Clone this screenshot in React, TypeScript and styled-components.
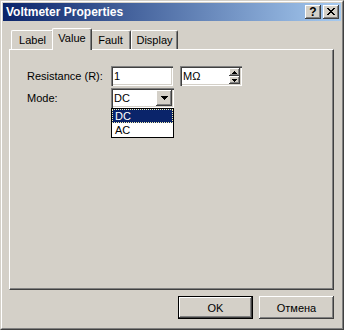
import React from "react";
import styled, { createGlobalStyle, css } from "styled-components";

const Global = createGlobalStyle`
  html, body { margin: 0; padding: 0; background: #d4d0c8; }
  * { box-sizing: border-box; }
`;

const raised = css`
  box-shadow: inset -1px -1px #404040, inset 1px 1px #ffffff, inset -2px -2px #808080;
`;

const sunken = css`
  box-shadow: inset 1px 1px #808080, inset 2px 2px #404040, inset -1px -1px #ffffff, inset -2px -2px #d4d0c8;
`;

const Window = styled.div`
  width: 344px;
  height: 330px;
  background: #d4d0c8;
  border: 1px solid;
  border-color: #d4d0c8 #404040 #404040 #d4d0c8;
  display: flex;
  flex-direction: column;
  font-family: "Liberation Sans", Arial, sans-serif;
  font-size: 11px;
  color: #000;
`;

const Frame = styled.div`
  flex: 1;
  display: flex;
  flex-direction: column;
  padding: 1px;
  border: 1px solid;
  border-color: #ffffff #808080 #808080 #ffffff;
`;

const TitleBar = styled.div`
  height: 18px;
  display: flex;
  align-items: center;
  padding: 0 2px 0 3px;
  background: linear-gradient(to right, #0a246a, #a6caf0);
`;

const Title = styled.div`
  flex: 1;
  color: #fff;
  font-weight: bold;
  font-size: 12px;
`;

const CaptionButtons = styled.div`
  display: flex;
  gap: 2px;
`;

const CaptionButton = styled.div`
  width: 16px;
  height: 14px;
  background: #d4d0c8;
  ${raised};
  display: flex;
  align-items: center;
  justify-content: center;
  font-weight: bold;
  font-size: 12px;
  line-height: 14px;
  padding-bottom: 1px;
`;

const Body = styled.div`
  flex: 1;
  display: flex;
  flex-direction: column;
  padding: 7px 7px 8px 6px;
`;

const TabRow = styled.div`
  height: 21px;
  display: flex;
  align-items: flex-end;
  padding-left: 2px;
  position: relative;
  z-index: 1;
`;

const Tab = styled.div<{ $w: number; $active?: boolean }>`
  width: ${(p) => p.$w}px;
  height: ${(p) => (p.$active ? 22 : 19)}px;
  margin: ${(p) => (p.$active ? "0 -2px -1px -2px" : "0")};
  background: #d4d0c8;
  border-top: 1px solid #ffffff;
  border-left: 1px solid #ffffff;
  border-right: 1px solid #404040;
  border-top-left-radius: 2px;
  border-top-right-radius: 2px;
  box-shadow: inset -1px 0 #808080;
  display: flex;
  align-items: ${(p) => (p.$active ? "flex-start" : "center")};
  padding-top: ${(p) => (p.$active ? "3px" : "0")};
  justify-content: center;
  position: relative;
  z-index: ${(p) => (p.$active ? 2 : 1)};
`;

const Panel = styled.div`
  flex: 1;
  border: 1px solid;
  border-color: #ffffff #404040 #404040 #ffffff;
  box-shadow: inset -1px -1px #808080;
  padding: 16px 0 0 17px;
`;

const Form = styled.div`
  display: grid;
  grid-template-columns: 78px 63px 62px;
  grid-auto-rows: 20px;
  column-gap: 6px;
  row-gap: 2px;
  align-items: center;
`;

const FieldLabel = styled.div`
  align-self: center;
  white-space: nowrap;
`;

const Edit = styled.div<{ $w: number }>`
  width: ${(p) => p.$w}px;
  height: 20px;
  background: #fff;
  ${sunken};
  display: flex;
  align-items: center;
  padding-left: 3px;
  position: relative;
`;

const EditText = styled.span`
  flex: 1;
`;

const Spinner = styled.div`
  width: 11px;
  height: 16px;
  margin-right: 2px;
  display: flex;
  flex-direction: column;
`;

const SpinButton = styled.div`
  flex: 1;
  background: #d4d0c8;
  ${raised};
  display: flex;
  align-items: center;
  justify-content: center;
`;

const ComboButton = styled.div`
  width: 16px;
  height: 16px;
  margin-right: 2px;
  background: #d4d0c8;
  ${raised};
  display: flex;
  align-items: center;
  justify-content: center;
`;

const DropList = styled.div`
  position: absolute;
  top: 100%;
  left: 0;
  width: 63px;
  height: 30px;
  background: #fff;
  border: 1px solid #000;
  display: flex;
  flex-direction: column;
`;

const ListItem = styled.div<{ $sel?: boolean }>`
  height: 14px;
  line-height: 12px;
  padding-left: 2px;
  background: ${(p) => (p.$sel ? "#0a246a" : "#fff")};
  color: ${(p) => (p.$sel ? "#fff" : "#000")};
  border: 1px dotted ${(p) => (p.$sel ? "#f4f0b0" : "transparent")};
`;

const Footer = styled.div`
  display: flex;
  justify-content: flex-end;
  gap: 6px;
  margin-top: 6px;
`;

const Button = styled.div<{ $default?: boolean }>`
  width: 75px;
  height: 23px;
  background: #d4d0c8;
  display: flex;
  align-items: center;
  justify-content: center;
  ${(p) =>
    p.$default
      ? css`
          border: 1px solid #000;
          box-shadow: inset -1px -1px #404040, inset 1px 1px #ffffff, inset -2px -2px #808080;
        `
      : raised};
`;

const Tri = ({ up, w = 7 }: { up?: boolean; w?: number }) => {
  const h = Math.ceil(w / 2);
  return (
    <svg width={w} height={h} viewBox={`0 0 ${w} ${h}`} shapeRendering="crispEdges">
      <polygon points={up ? `0,${h} ${w},${h} ${w / 2},0` : `0,0 ${w},0 ${w / 2},${h}`} fill="#000" />
    </svg>
  );
};

export default function App() {
  return (
    <>
      <Global />
      <Window>
        <Frame>
          <TitleBar>
            <Title>Voltmeter Properties</Title>
            <CaptionButtons>
              <CaptionButton>?</CaptionButton>
              <CaptionButton>
                <svg width="8" height="7" viewBox="0 0 8 7" shapeRendering="crispEdges">
                  <path d="M0 0h2v1h-2zM6 0h2v1h-2zM1 1h2v1h-2zM5 1h2v1h-2zM2 2h4v1h-4zM3 3h2v1h-2zM2 4h4v1h-4zM1 5h2v1h-2zM5 5h2v1h-2zM0 6h2v1h-2zM6 6h2v1h-2z" fill="#000" />
                </svg>
              </CaptionButton>
            </CaptionButtons>
          </TitleBar>
          <Body>
            <TabRow>
              <Tab $w={43}>Label</Tab>
              <Tab $w={40} $active>Value</Tab>
              <Tab $w={41}>Fault</Tab>
              <Tab $w={47}>Display</Tab>
            </TabRow>
            <Panel>
              <Form>
                <FieldLabel>Resistance (R):</FieldLabel>
                <Edit $w={62}>
                  <EditText>1</EditText>
                </Edit>
                <Edit $w={62}>
                  <EditText>MΩ</EditText>
                  <Spinner>
                    <SpinButton>
                      <Tri up w={5} />
                    </SpinButton>
                    <SpinButton>
                      <Tri w={5} />
                    </SpinButton>
                  </Spinner>
                </Edit>
                <FieldLabel>Mode:</FieldLabel>
                <Edit $w={63}>
                  <EditText>DC</EditText>
                  <ComboButton>
                    <Tri w={7} />
                  </ComboButton>
                  <DropList>
                    <ListItem $sel>DC</ListItem>
                    <ListItem>AC</ListItem>
                  </DropList>
                </Edit>
              </Form>
            </Panel>
            <Footer>
              <Button $default>OK</Button>
              <Button>Отмена</Button>
            </Footer>
          </Body>
        </Frame>
      </Window>
    </>
  );
}
